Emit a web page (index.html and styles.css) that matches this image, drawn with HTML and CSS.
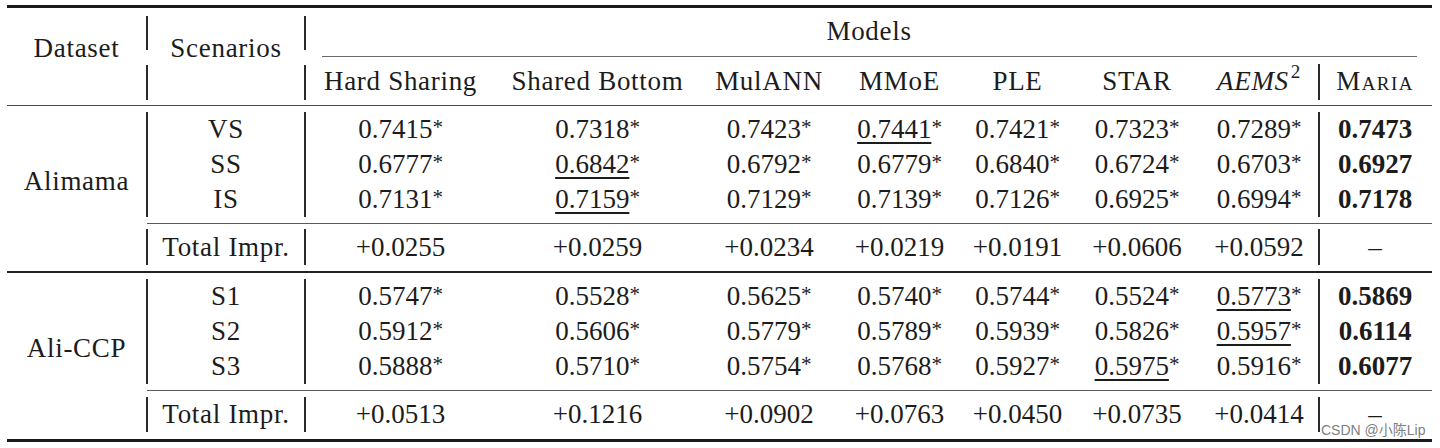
FILE: index.html
```html
<!DOCTYPE html>
<html lang="en">
<head>
<meta charset="utf-8">
<title>Results</title>
<link rel="stylesheet" href="styles.css">
</head>
<body>
<div class="sheet">
<table class="results">
<colgroup>
<col class="w-ds"><col class="w-sc"><col class="w-hs"><col class="w-sb"><col class="w-mul"><col class="w-mmoe"><col class="w-ple"><col class="w-star"><col class="w-aems"><col class="w-maria">
</colgroup>
<thead>
<tr class="h1">
<th rowspan="3" class="ds-head lbl">Dataset</th>
<th rowspan="3" class="sc-head lbl">Scenarios</th>
<th colspan="8" class="models lbl">Models</th>
</tr>
<tr class="rule r-models"><td colspan="8"><div class="line cmid-models"></div></td></tr>
<tr class="h2">
<th class="lbl">Hard Sharing</th>
<th class="lbl">Shared Bottom</th>
<th class="lbl">MulANN</th>
<th class="lbl">MMoE</th>
<th class="lbl">PLE</th>
<th class="lbl">STAR</th>
<th class="lbl"><i>AEMS</i><sup class="sq">2</sup></th>
<th class="vl maria">Maria</th>
</tr>
<tr class="rule r-mid"><td colspan="10"><div class="line mid"></div></td></tr>
</thead>
<tbody>
<tr class="row">
<td rowspan="5" class="ds lbl">Alimama</td>
<td class="sc lbl">VS</td>
<td>0.7415<span class="ast">*</span></td>
<td>0.7318<span class="ast">*</span></td>
<td>0.7423<span class="ast">*</span></td>
<td><span class="ul">0.7441</span><span class="ast">*</span></td>
<td>0.7421<span class="ast">*</span></td>
<td>0.7323<span class="ast">*</span></td>
<td>0.7289<span class="ast">*</span></td>
<td class="vl best">0.7473</td>
</tr>
<tr class="row">
<td class="sc lbl">SS</td>
<td>0.6777<span class="ast">*</span></td>
<td><span class="ul">0.6842</span><span class="ast">*</span></td>
<td>0.6792<span class="ast">*</span></td>
<td>0.6779<span class="ast">*</span></td>
<td>0.6840<span class="ast">*</span></td>
<td>0.6724<span class="ast">*</span></td>
<td>0.6703<span class="ast">*</span></td>
<td class="vl best">0.6927</td>
</tr>
<tr class="row">
<td class="sc lbl">IS</td>
<td>0.7131<span class="ast">*</span></td>
<td><span class="ul">0.7159</span><span class="ast">*</span></td>
<td>0.7129<span class="ast">*</span></td>
<td>0.7139<span class="ast">*</span></td>
<td>0.7126<span class="ast">*</span></td>
<td>0.6925<span class="ast">*</span></td>
<td>0.6994<span class="ast">*</span></td>
<td class="vl best">0.7178</td>
</tr>
<tr class="rule r-cmid"><td colspan="9"><div class="line cmid"></div></td></tr>
<tr class="total t1">
<td class="sc lbl">Total Impr.</td>
<td>+0.0255</td>
<td>+0.0259</td>
<td>+0.0234</td>
<td>+0.0219</td>
<td>+0.0191</td>
<td>+0.0606</td>
<td>+0.0592</td>
<td class="vl dash">–</td>
</tr>
<tr class="rule r-group"><td colspan="10"><div class="line group"></div></td></tr>
<tr class="row">
<td rowspan="5" class="ds lbl">Ali-CCP</td>
<td class="sc lbl">S1</td>
<td>0.5747<span class="ast">*</span></td>
<td>0.5528<span class="ast">*</span></td>
<td>0.5625<span class="ast">*</span></td>
<td>0.5740<span class="ast">*</span></td>
<td>0.5744<span class="ast">*</span></td>
<td>0.5524<span class="ast">*</span></td>
<td><span class="ul">0.5773</span><span class="ast">*</span></td>
<td class="vl best">0.5869</td>
</tr>
<tr class="row">
<td class="sc lbl">S2</td>
<td>0.5912<span class="ast">*</span></td>
<td>0.5606<span class="ast">*</span></td>
<td>0.5779<span class="ast">*</span></td>
<td>0.5789<span class="ast">*</span></td>
<td>0.5939<span class="ast">*</span></td>
<td>0.5826<span class="ast">*</span></td>
<td><span class="ul">0.5957</span><span class="ast">*</span></td>
<td class="vl best">0.6114</td>
</tr>
<tr class="row">
<td class="sc lbl">S3</td>
<td>0.5888<span class="ast">*</span></td>
<td>0.5710<span class="ast">*</span></td>
<td>0.5754<span class="ast">*</span></td>
<td>0.5768<span class="ast">*</span></td>
<td>0.5927<span class="ast">*</span></td>
<td><span class="ul">0.5975</span><span class="ast">*</span></td>
<td>0.5916<span class="ast">*</span></td>
<td class="vl best">0.6077</td>
</tr>
<tr class="rule r-cmid2"><td colspan="9"><div class="line cmid"></div></td></tr>
<tr class="total t2">
<td class="sc lbl">Total Impr.</td>
<td>+0.0513</td>
<td>+0.1216</td>
<td>+0.0902</td>
<td>+0.0763</td>
<td>+0.0450</td>
<td>+0.0735</td>
<td>+0.0414</td>
<td class="vl dash">–</td>
</tr>
</tbody>
</table>
</div>
<div class="watermark">CSDN @小陈Lip</div>
</body>
</html>
```
FILE: styles.css
```css
* { box-sizing: border-box; }
html, body { margin: 0; padding: 0; background: #ffffff; }
body {
  font-family: "Liberation Serif", "Times New Roman", serif;
  color: #1c1c1c;
  width: 1440px;
  height: 448px;
  overflow: hidden;
}
.sheet {
  width: 1425px;
  margin: 5px 0 0 7px;
  border-top: 3px solid #1a1a1a;
  border-bottom: 3px solid #1a1a1a;
  padding-bottom: 7px;
}
.results {
  width: 1425px;
  table-layout: fixed;
  border-collapse: separate;
  border-spacing: 0;
  font-size: 27px;
  line-height: 30px;
}
.w-ds { width: 139px; }
.w-sc { width: 160px; }
.w-hs { width: 189px; }
.w-sb { width: 205px; }
.w-mul { width: 138px; }
.w-mmoe { width: 123px; }
.w-ple { width: 113px; }
.w-star { width: 126px; }
.w-aems { width: 118px; }
.w-maria { width: 114px; }

.results th, .results td {
  padding: 0;
  text-align: center;
  vertical-align: top;
  font-weight: normal;
  white-space: nowrap;
}
.results .lbl { letter-spacing: 0.7px; }

/* header */
.results .h1 { height: 42px; }
.results .h1 .models { padding-top: 8px; }
.results .ds-head, .results .sc-head { padding-top: 25px; }
.results .sc-head {
  background:
    linear-gradient(#2a2a2a, #2a2a2a) left 8px / 2px 34px no-repeat,
    linear-gradient(#2a2a2a, #2a2a2a) left 57px / 2px 35px no-repeat,
    linear-gradient(#2a2a2a, #2a2a2a) right 8px / 2px 34px no-repeat,
    linear-gradient(#2a2a2a, #2a2a2a) right 57px / 2px 35px no-repeat;
}
.results .h2 { height: 36px; }
.results .h2 th { padding-top: 2px; }
.sq {
  font-size: 19px;
  font-style: normal;
  line-height: 0;
  vertical-align: 0;
  position: relative;
  top: -12px;
  margin-left: 2px;
}
.results .maria { font-variant: small-caps; letter-spacing: 1.4px; }

/* rules */
.results .rule td { padding: 0; line-height: 0; font-size: 0; }
.r-models { height: 14px; }
.r-mid { height: 12px; }
.r-cmid { height: 12px; }
.r-group { height: 14px; }
.r-cmid2 { height: 13px; }
.line { height: 1px; background: #555; }
.cmid-models { margin: 6px 15px 0 16px; background: #6a6a6a; }
.mid { margin-top: 5px; background: #4a4a4a; }
.cmid { margin: 6px 0 0 1px; background: #5a5a5a; }
.group { margin-top: 6px; height: 2px; background: #222; }

/* body rows */
.results .row { height: 35px; }
.results .row td { line-height: 35px; }
.results .ds { line-height: 35px; padding-top: 52px; }
.results .t1 { height: 36px; }
.results .t1 td { line-height: 36px; }
.results .t2 { height: 35px; }
.results .t2 td { line-height: 35px; }

.results .sc { box-shadow: inset 2px 0 0 #2a2a2a, inset -2px 0 0 #2a2a2a; }
.results .vl { box-shadow: inset 2px 0 0 #2a2a2a; }
.results .best { font-weight: bold; }
.ul {
  text-decoration: underline;
  text-decoration-thickness: 1.5px;
  text-underline-offset: 4px;
  text-decoration-skip-ink: none;
}
.ast {
  font-size: 21px;
  line-height: 0;
  position: relative;
  top: -4px;
}

.watermark {
  position: absolute;
  left: 1321px;
  top: 422px;
  font-family: "Liberation Sans", "Noto Sans CJK SC", sans-serif;
  font-size: 14px;
  line-height: 16px;
  color: #808080;
  white-space: nowrap;
}
```
